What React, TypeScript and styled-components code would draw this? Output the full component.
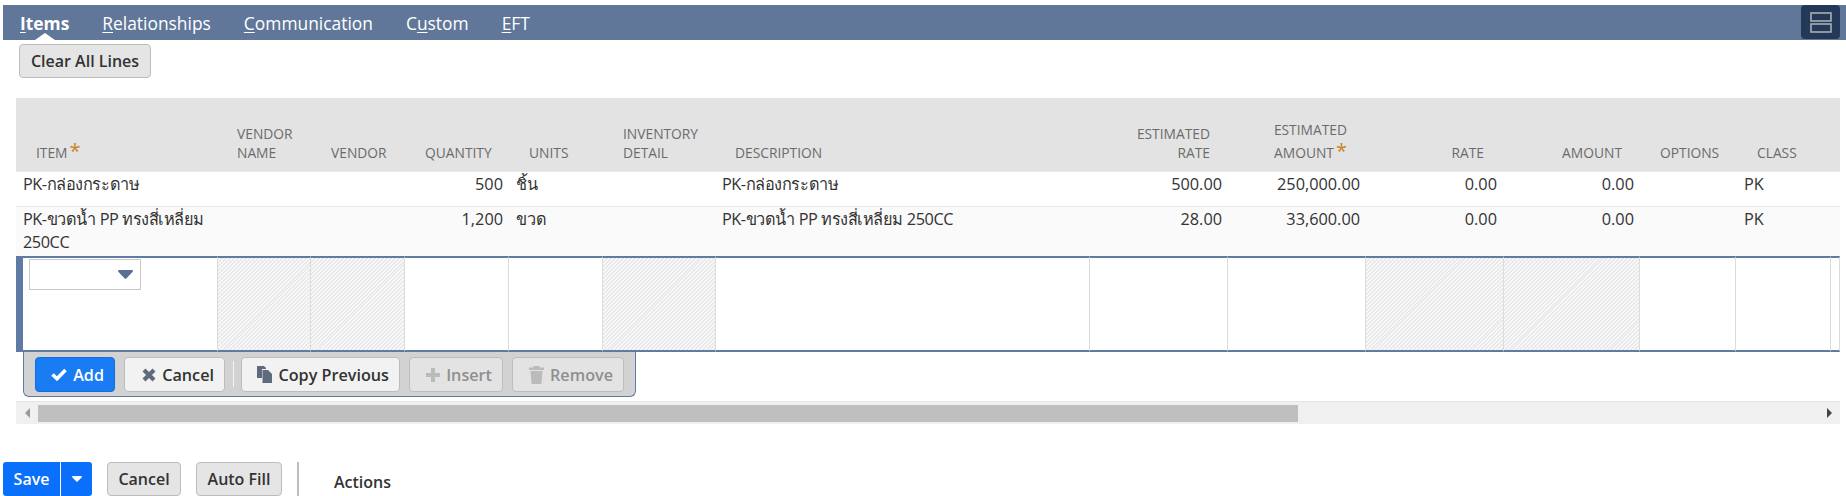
import { createGlobalStyle, styled } from "styled-components";

const GlobalStyle = createGlobalStyle`
  html, body {
    margin: 0;
    background: #fff;
    font-family: "Open Sans", "Noto Sans", "Noto Sans CJK SC", sans-serif;
    color: #333;
  }
`;

const COLUMNS = [202, 93, 94, 104, 94, 113, 374, 138, 138, 138, 136, 96, 95, 9];

const Page = styled.div`
  width: 1846px;
  height: 496px;
  overflow: hidden;
  padding-top: 5px;
  box-sizing: border-box;
`;

const TabBar = styled.nav`
  display: flex;
  align-items: center;
  height: 35px;
  margin-left: 3px;
  padding-left: 17px;
  gap: 33px;
  background: #607799;
  position: relative;
`;

const Tab = styled.a<{ $active?: boolean }>`
  position: relative;
  font-size: 17.4px;
  height: 35px;
  padding-top: 1px;
  box-sizing: border-box;
  line-height: 34px;
  color: #fff;
  font-weight: ${(p) => (p.$active ? 700 : 400)};
  u {
    text-underline-offset: 2px;
  }
  ${(p) =>
    p.$active &&
    `&::after {
      content: "";
      position: absolute;
      left: 50%;
      bottom: 0;
      margin-left: -10px;
      border-left: 10px solid transparent;
      border-right: 10px solid transparent;
      border-bottom: 7px solid #fff;
    }`}
`;

const LayoutToggle = styled.button`
  position: absolute;
  top: 0;
  right: 6px;
  width: 39px;
  height: 34px;
  padding: 0;
  border: 0;
  border-radius: 4px;
  background: #243858;
  display: flex;
  align-items: center;
  justify-content: center;
`;

const Button = styled.button<{ $disabled?: boolean; $primary?: boolean; $w: number }>`
  display: inline-flex;
  align-items: center;
  justify-content: flex-end;
  gap: 6px;
  width: ${(p) => p.$w}px;
  height: 35px;
  padding: 0 10px 0 0;
  box-sizing: border-box;
  border-radius: 4px;
  font-family: inherit;
  font-size: 16.2px;
  font-weight: 600;
  border: 1px solid ${(p) => (p.$primary ? "#0f6fe0" : "#bdbdbd")};
  background: ${(p) => (p.$primary ? "#1a7cf2" : p.$disabled ? "#e3e3e3" : "#f2f2f2")};
  color: ${(p) => (p.$primary ? "#fff" : p.$disabled ? "#8f8f8f" : "#333")};
  svg {
    flex: none;
    color: ${(p) => (p.$primary ? "#fff" : p.$disabled ? "#bbb" : "#5d6b7d")};
  }
`;

const PlainButton = styled(Button)`
  justify-content: center;
  height: 34px;
  padding: 0;
  font-size: 16px;
  background: #e5e5e5;
`;

const ClearRow = styled.div`
  padding: 4px 0 0 19px;
  height: 58px;
  box-sizing: border-box;
`;

const Machine = styled.div`
  margin-left: 16px;
  width: 1824px;
`;

const Table = styled.table`
  table-layout: fixed;
  border-collapse: separate;
  border-spacing: 0;
  width: 1824px;
`;

const HeadRow = styled.tr`
  height: 73px;
  background: #e3e3e3;
`;

const Th = styled.th<{ $right?: boolean; $indent?: number; $pad?: number }>`
  vertical-align: bottom;
  padding: 0 ${(p) => p.$pad ?? 0}px 9px ${(p) => p.$indent ?? 0}px;
  font-size: 13.8px;
  line-height: 19px;
  font-weight: 400;
  color: #6b6b6b;
  text-align: ${(p) => (p.$right ? "right" : "left")};
  white-space: pre-line;
`;

const Star = styled.span`
  display: inline-block;
  color: #c8851c;
  font-size: 20px;
  line-height: 23px;
  margin-left: 2px;
`;

const Row = styled.tr<{ $alt?: boolean }>`
  background: ${(p) => (p.$alt ? "#fafafa" : "#fff")};
`;

const Td = styled.td<{ $right?: boolean; $h: number; $pad?: number }>`
  height: ${(p) => p.$h}px;
  vertical-align: top;
  box-sizing: border-box;
  padding: 1px ${(p) => p.$pad ?? 0}px 0 ${(p) => (p.$right ? 0 : p.$pad ?? 0)}px;
  font-size: 16.3px;
  line-height: 22.5px;
  color: #333;
  text-align: ${(p) => (p.$right ? "right" : "left")};
  border-top: 1px solid #e8e8e8;
`;

const ThaiText = styled.span`
  letter-spacing: -0.45px;
`;

const EditCell = styled.td<{ $hatched?: boolean }>`
  height: 96px;
  box-sizing: border-box;
  padding: 0;
  vertical-align: top;
  border-top: 2px solid #5f7aa3;
  border-bottom: 2px solid #5f7aa3;
  border-right: 1px solid #dcdcdc;
  background: ${(p) =>
    p.$hatched
      ? "repeating-linear-gradient(135deg, #e9e9e9 0 1.4px, #f8f8f8 1.4px 2.8px)"
      : "#fff"};
`;

const FirstEditCell = styled(EditCell)`
  border-left: 7px solid #5f7aa3;
  padding: 1px 0 0 6px;
`;

const Dropdown = styled.div`
  width: 112px;
  height: 31px;
  box-sizing: border-box;
  border: 1px solid #c8c8c8;
  background: #fff;
  display: flex;
  align-items: center;
  justify-content: flex-end;
  padding-right: 7px;
`;

const EditBar = styled.div`
  display: flex;
  align-items: flex-start;
  gap: 9px;
  width: 613px;
  height: 45px;
  margin-left: 7px;
  padding: 5px 0 0 11px;
  box-sizing: border-box;
  background: #d2d2d2;
  border: 1px solid #5f7aa3;
  border-top: 0;
  border-radius: 0 0 6px 6px;
`;

const Separator = styled.span`
  width: 1px;
  height: 26px;
  margin: 4px -2px 0 -1px;
  background: #f4f4f4;
`;

const ScrollTrack = styled.div`
  display: flex;
  align-items: center;
  height: 23px;
  margin-top: 4px;
  background: #f0f0f0;
  border-top: 1px solid #e6e6e6;
  box-sizing: border-box;
`;

const ScrollThumb = styled.div`
  width: 1260px;
  height: 17px;
  background: #bfbfbf;
`;

const ScrollSide = styled.span`
  width: 22px;
  display: flex;
  justify-content: center;
  flex: none;
`;

const ScrollFill = styled.div`
  flex: 1;
`;

const ScrollArrow = styled.span<{ $left?: boolean }>`
  width: 0;
  height: 0;
  border-top: 5px solid transparent;
  border-bottom: 5px solid transparent;
  border-${(p) => (p.$left ? "right" : "left")}: 5px solid ${(p) => (p.$left ? "#999" : "#444")};
`;

const Footer = styled.div`
  display: flex;
  align-items: center;
  margin-top: 38px;
  margin-left: 3px;
  gap: 15px;
`;

const SaveGroup = styled.div`
  display: flex;
  height: 34px;
  border-radius: 3px;
  overflow: hidden;
  background: #0a6ffb;
  color: #fff;
  font-size: 16px;
  font-weight: 600;
`;

const SaveLabel = styled.span`
  width: 57px;
  display: flex;
  align-items: center;
  justify-content: center;
  border-right: 1px solid #fff;
`;

const SaveCaret = styled.span`
  width: 31px;
  display: flex;
  align-items: center;
  justify-content: center;
`;

const FooterDivider = styled.span`
  width: 2px;
  height: 34px;
  background: #bdbdbd;
`;

const ActionsLabel = styled.span`
  margin-left: 20px;
  padding-top: 6px;
  font-size: 16px;
  font-weight: 600;
  color: #333;
`;

const Icon = styled.svg`
  display: block;
`;

const Caret = ({ w = 15, color = "#5a6f92" }: { w?: number; color?: string }) => (
  <Icon width={w} height={(w * 9) / 15} viewBox="0 0 15 9" fill={color}>
    <path d="M1 0h13a1 1 0 0 1 .7 1.7L8.3 8.4a1.1 1.1 0 0 1-1.6 0L.3 1.7A1 1 0 0 1 1 0z" />
  </Icon>
);

const CheckIcon = () => (
  <Icon width="16" height="13" viewBox="0 0 16 13" fill="none" stroke="currentColor" strokeWidth="3.6">
    <path d="M1.5 6.5l4.5 4.2L14.5 2" />
  </Icon>
);

const CrossIcon = () => (
  <Icon width="14" height="14" viewBox="0 0 14 14" fill="none" stroke="currentColor" strokeWidth="4.2">
    <path d="M2 2l10 10M12 2L2 12" />
  </Icon>
);

const PlusIcon = () => (
  <Icon width="14" height="14" viewBox="0 0 14 14" fill="none" stroke="currentColor" strokeWidth="4">
    <path d="M7 0v14M0 7h14" />
  </Icon>
);

const CopyIcon = () => (
  <Icon width="15" height="17" viewBox="0 0 15 17" fill="currentColor">
    <path d="M0 0h7l2 2v1H5v9H0z" />
    <path d="M5.5 4H11l4 4v9H5.500z" />
  </Icon>
);

const TrashIcon = () => (
  <Icon width="15" height="18" viewBox="0 0 15 18" fill="currentColor">
    <path d="M5 0h5l1 1.500h4V4H0V1.500h4z" />
    <path d="M1.500 5h12l-1 12.200a.8.8 0 0 1-.8.800H3.300a.8.8 0 0 1-.8-.8z" />
  </Icon>
);

const headers = [
  { label: "ITEM", star: true, indent: 20 },
  { label: "VENDOR\nNAME", indent: 19 },
  { label: "VENDOR", indent: 20 },
  { label: "QUANTITY", indent: 20 },
  { label: "UNITS", indent: 20 },
  { label: "INVENTORY\nDETAIL", indent: 20 },
  { label: "DESCRIPTION", indent: 19 },
  { label: "ESTIMATED\nRATE", right: true, pad: 18 },
  { label: "ESTIMATED\nAMOUNT", right: true, star: true, pad: 19 },
  { label: "RATE", right: true, pad: 20 },
  { label: "AMOUNT", right: true, pad: 18 },
  { label: "OPTIONS", indent: 20 },
  { label: "CLASS", indent: 21 },
  { label: "" },
];

const rows = [
  { item: "PK-กล่องกระดาษ", qty: "500", unit: "ชิ้น", desc: "PK-กล่องกระดาษ", rate: "500.00", amount: "250,000.00", h: 35 },
  { item: "PK-ขวดน้ำ PP ทรงสี่เหลี่ยม 250CC", qty: "1,200", unit: "ขวด", desc: "PK-ขวดน้ำ PP ทรงสี่เหลี่ยม 250CC", rate: "28.00", amount: "33,600.00", h: 50 },
];

const HATCHED = [1, 2, 5, 9, 10];

export default function App() {
  return (
    <Page>
      <GlobalStyle />
      <TabBar>
        <Tab $active><u>I</u>tems</Tab>
        <Tab><u>R</u>elationships</Tab>
        <Tab><u>C</u>ommunication</Tab>
        <Tab>C<u>u</u>stom</Tab>
        <Tab><u>E</u>FT</Tab>
        <LayoutToggle aria-label="Toggle layout">
          <Icon width="22" height="21" viewBox="0 0 22 21" fill="none" stroke="#a9aeb6" strokeWidth="1.6">
            <rect x="1" y="1" width="20" height="8" />
            <rect x="1" y="12" width="20" height="8" />
          </Icon>
        </LayoutToggle>
      </TabBar>
      <ClearRow>
        <PlainButton $w={132}>Clear All Lines</PlainButton>
      </ClearRow>
      <Machine>
        <Table>
          <colgroup>
            {COLUMNS.map((w, i) => (
              <col key={i} width={w} />
            ))}
          </colgroup>
          <thead>
            <HeadRow>
              {headers.map((h, i) => (
                <Th key={i} $right={h.right} $indent={h.indent} $pad={h.pad}>
                  {h.label}
                  {h.star && <Star>*</Star>}
                </Th>
              ))}
            </HeadRow>
          </thead>
          <tbody>
            {rows.map((r, i) => (
              <Row key={i} $alt={i === 1}>
                <Td $h={r.h} $pad={7}><ThaiText>{r.item}</ThaiText></Td>
                <Td $h={r.h} />
                <Td $h={r.h} />
                <Td $h={r.h} $right $pad={6}>{r.qty}</Td>
                <Td $h={r.h} $pad={7}>{r.unit}</Td>
                <Td $h={r.h} />
                <Td $h={r.h} $pad={6}><ThaiText>{r.desc}</ThaiText></Td>
                <Td $h={r.h} $right $pad={6}>{r.rate}</Td>
                <Td $h={r.h} $right $pad={6}>{r.amount}</Td>
                <Td $h={r.h} $right $pad={7}>0.00</Td>
                <Td $h={r.h} $right $pad={6}>0.00</Td>
                <Td $h={r.h} />
                <Td $h={r.h} $pad={8}>PK</Td>
                <Td $h={r.h} />
              </Row>
            ))}
            <tr>
              <FirstEditCell>
                <Dropdown>
                  <Caret />
                </Dropdown>
              </FirstEditCell>
              {COLUMNS.slice(1).map((_, i) => (
                <EditCell key={i} $hatched={HATCHED.includes(i + 1)} />
              ))}
            </tr>
          </tbody>
        </Table>
        <EditBar>
          <Button $primary $w={80}><CheckIcon />Add</Button>
          <Button $w={101}><CrossIcon />Cancel</Button>
          <Separator />
          <Button $w={159}><CopyIcon />Copy Previous</Button>
          <Button $disabled $w={94}><PlusIcon />Insert</Button>
          <Button $disabled $w={112}><TrashIcon />Remove</Button>
        </EditBar>
        <ScrollTrack>
          <ScrollSide><ScrollArrow $left /></ScrollSide>
          <ScrollThumb />
          <ScrollFill />
          <ScrollSide><ScrollArrow /></ScrollSide>
        </ScrollTrack>
      </Machine>
      <Footer>
        <SaveGroup>
          <SaveLabel>Save</SaveLabel>
          <SaveCaret><Caret w={10} color="#fff" /></SaveCaret>
        </SaveGroup>
        <PlainButton $w={74}>Cancel</PlainButton>
        <PlainButton $w={86}>Auto Fill</PlainButton>
        <FooterDivider />
        <ActionsLabel>Actions</ActionsLabel>
      </Footer>
    </Page>
  );
}
